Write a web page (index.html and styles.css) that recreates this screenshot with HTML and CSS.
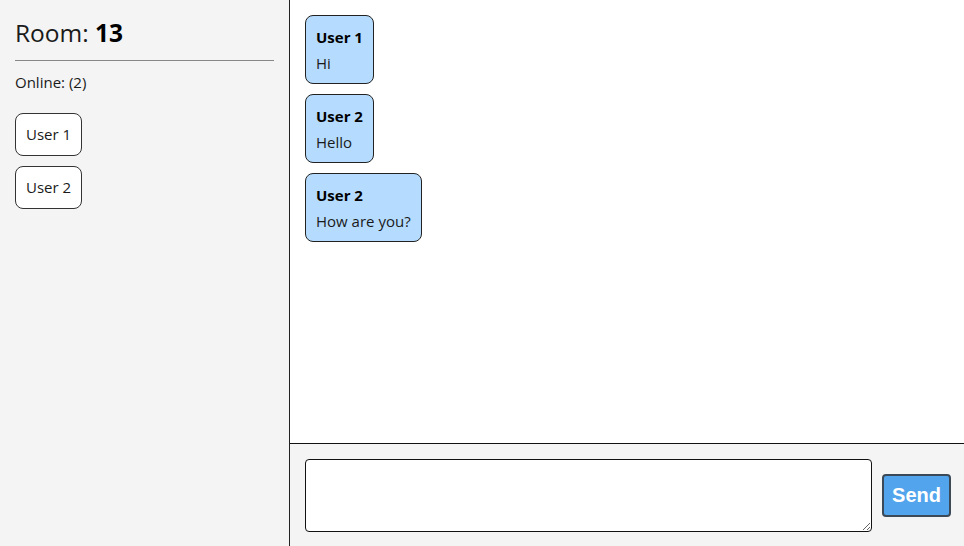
FILE: index.html
```html
<!DOCTYPE html>
<html>
<head>
<meta charset="utf-8">
<link rel="stylesheet" href="styles.css">
</head>
<body>
<div class="app">
  <aside class="sidebar">
    <h2 class="room">Room: <b>13</b></h2>
    <hr class="divider">
    <div class="online">Online: (2)</div>
    <div class="users">
      <div class="user">User 1</div>
      <div class="user">User 2</div>
    </div>
  </aside>
  <main class="chat">
    <div class="messages">
      <div class="msg"><div class="name">User 1</div><div class="text">Hi</div></div>
      <div class="msg"><div class="name">User 2</div><div class="text">Hello</div></div>
      <div class="msg"><div class="name">User 2</div><div class="text">How are you?</div></div>
    </div>
    <div class="composer">
      <textarea class="input"></textarea>
      <button class="send">Send</button>
    </div>
  </main>
</div>
</body>
</html>
```
FILE: styles.css
```css
html, body { margin: 0; padding: 0; height: 100%; }
body { font-family: "Open Sans", "Noto Sans", sans-serif; color: #1a1a1a; }
.app { display: flex; height: 100vh; }
.sidebar {
  width: 259px; flex: none; background: #f4f4f4;
  border-right: 1px solid #222; padding: 15px;
}
.room { margin: 0; font-size: 24.5px; font-weight: 400; line-height: 36px; }
.room b { font-weight: 700; color: #000; }
.divider { margin: 9px 0 0; border: none; border-top: 1px solid #888; }
.online { margin-top: 10px; font-size: 15px; line-height: 22px; }
.users { margin-top: 20px; display: flex; flex-direction: column; align-items: flex-start; gap: 10px; }
.user {
  background: #fff; border: 1px solid #333; border-radius: 8px;
  padding: 10px; font-size: 15px; line-height: 21px;
}
.chat { flex: 1; display: flex; flex-direction: column; background: #fff; }
.messages { flex: 1; padding: 15px; display: flex; flex-direction: column; align-items: flex-start; gap: 10px; }
.msg {
  background: #b5dcfe; border: 1px solid #222; border-radius: 8px;
  padding: 10px;
}
.name { font-weight: 700; font-size: 15px; line-height: 22px; color: #000; }
.text { margin-top: 4px; font-size: 15px; line-height: 21px; padding-top: 1px; margin-bottom: -1px; }
.composer {
  border-top: 1px solid #111; background: #f4f4f4;
  padding: 15px 13px 14px 15px; display: flex; align-items: center; gap: 10px;
}
.input {
  flex: 1; height: 73px; box-sizing: border-box; margin: 0;
  border: 1px solid #111; border-radius: 4px; background: #fff; resize: vertical;
}
.send {
  width: 69px; height: 43px; box-sizing: border-box; margin: 0;
  background: #52a4ec; color: #fff; border: 2px solid #3c4a57; border-radius: 4px;
  font-family: "Liberation Sans", Arial, sans-serif; font-weight: 700; font-size: 20px;
  padding: 0;
}
```
